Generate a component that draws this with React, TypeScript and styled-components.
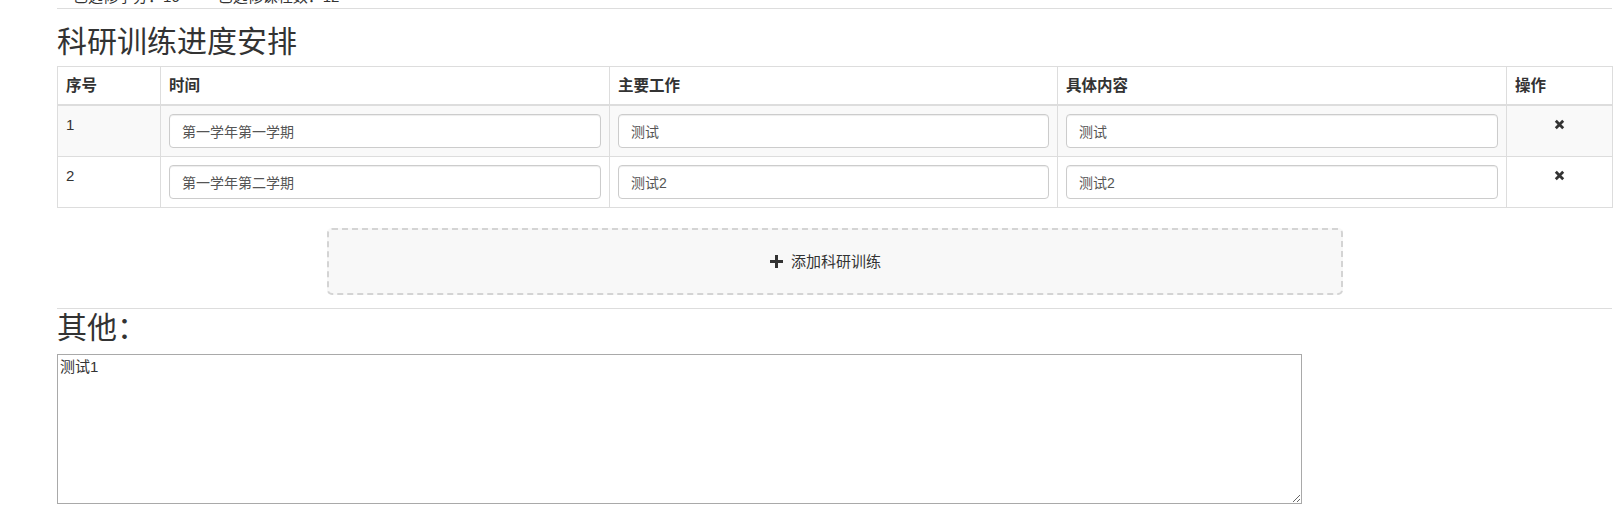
import styled, { createGlobalStyle } from "styled-components";

const GlobalStyle = createGlobalStyle`
  body {
    margin: 0;
    background: #fff;
    color: #333;
    font-family: "Liberation Sans", "Noto Sans CJK SC", sans-serif;
    font-size: 15px;
    line-height: 1.42857;
    overflow: hidden;
  }
`;

const Page = styled.div`
  width: 1555px;
  padding-left: 57px;
`;

// summary line scrolled mostly out of view above the section
const StatsLine = styled.div`
  display: flex;
  gap: 38px;
  height: 20px;
  line-height: 20px;
  margin-top: -13px;
  padding-left: 16px;
`;

const Divider = styled.hr<{ $top?: number }>`
  margin: ${(p) => p.$top ?? 0}px 0 0;
  border: 0;
  border-top: 1px solid #ddd;
  height: 0;
`;

const SectionTitle = styled.h2<{ $top: number; $bottom: number }>`
  font-size: 30px;
  font-weight: 400;
  line-height: 33px;
  margin: ${(p) => p.$top}px 0 ${(p) => p.$bottom}px;
`;

const Table = styled.table`
  width: 1555px;
  table-layout: fixed;
  border-collapse: collapse;
  border: 1px solid #ddd;
`;

const HeadCell = styled.th<{ $w: number }>`
  box-sizing: border-box;
  width: ${(p) => p.$w}px;
  padding: 8px;
  text-align: left;
  font-size: 15.5px;
  font-weight: 700;
  line-height: 21px;
  border: 1px solid #ddd;
  border-bottom-width: 2px;
  vertical-align: bottom;
`;

const Row = styled.tr<{ $striped?: boolean }>`
  background: ${(p) => (p.$striped ? "#f9f9f9" : "#fff")};
`;

const Cell = styled.td<{ $center?: boolean }>`
  padding: 8px;
  border: 1px solid #ddd;
  vertical-align: top;
  text-align: ${(p) => (p.$center ? "center" : "left")};
`;

const TextInput = styled.input`
  display: block;
  box-sizing: border-box;
  width: 100%;
  height: 34px;
  padding: 6px 12px;
  font-family: inherit;
  font-size: 14px;
  color: #555;
  background: #fff;
  border: 1px solid #ccc;
  border-radius: 4px;
  box-shadow: inset 0 1px 1px rgba(0, 0, 0, 0.075);
  outline: none;
`;

const RemoveButton = styled.span`
  display: inline-flex;
  align-items: center;
  justify-content: center;
  height: 21px;
  cursor: pointer;
  color: #333;
`;

const AddButton = styled.div`
  box-sizing: border-box;
  width: 1016px;
  height: 67px;
  margin: 20px auto 0;
  padding-right: 18px;
  display: flex;
  align-items: center;
  justify-content: center;
  gap: 8px;
  background: #f8f8f8;
  border: 2px dashed #d4d4d4;
  border-radius: 5px;
  cursor: pointer;
  font-size: 15px;
  color: #333;
`;

const NotesArea = styled.textarea`
  display: block;
  box-sizing: border-box;
  width: 1245px;
  height: 150px;
  margin: 0;
  padding: 2px;
  border: 1px solid #a9a9a9;
  font-family: inherit;
  font-size: 15px;
  line-height: 1.3;
  color: #333;
  outline: none;
`;

const RemoveIcon = () => (
  <svg width="11" height="11" viewBox="0 0 11 11">
    <path d="M1.8 1.8 L9.2 9.2 M9.2 1.8 L1.8 9.2" stroke="#333" strokeWidth="2.8" />
  </svg>
);

const PlusIcon = () => (
  <svg width="13" height="13" viewBox="0 0 13 13">
    <path d="M5 0h3v5h5v3H8v5H5V8H0V5h5z" fill="#333" />
  </svg>
);

const columns = [
  { title: "序号", w: 103 },
  { title: "时间", w: 449 },
  { title: "主要工作", w: 448 },
  { title: "具体内容", w: 449 },
  { title: "操作", w: 106 },
];

const plans = [
  { id: 1, time: "第一学年第一学期", work: "测试", detail: "测试" },
  { id: 2, time: "第一学年第二学期", work: "测试2", detail: "测试2" },
];

export default function App() {
  return (
    <>
      <GlobalStyle />
      <Page>
        <StatsLine>
          <span>已选修学分：16</span>
          <span>已选修课程数：12</span>
        </StatsLine>
        <Divider $top={1} />

        <SectionTitle $top={16} $bottom={8}>科研训练进度安排</SectionTitle>
        <Table>
          <thead>
            <tr>
              {columns.map((c) => (
                <HeadCell key={c.title} $w={c.w}>{c.title}</HeadCell>
              ))}
            </tr>
          </thead>
          <tbody>
            {plans.map((p, i) => (
              <Row key={p.id} $striped={i % 2 === 0}>
                <Cell>{p.id}</Cell>
                <Cell><TextInput defaultValue={p.time} /></Cell>
                <Cell><TextInput defaultValue={p.work} /></Cell>
                <Cell><TextInput defaultValue={p.detail} /></Cell>
                <Cell $center>
                  <RemoveButton><RemoveIcon /></RemoveButton>
                </Cell>
              </Row>
            ))}
          </tbody>
        </Table>

        <AddButton>
          <PlusIcon />
          <span>添加科研训练</span>
        </AddButton>

        <Divider $top={13} />
        <SectionTitle $top={2} $bottom={10}>其他：</SectionTitle>
        <NotesArea defaultValue="测试1" />
      </Page>
    </>
  );
}
